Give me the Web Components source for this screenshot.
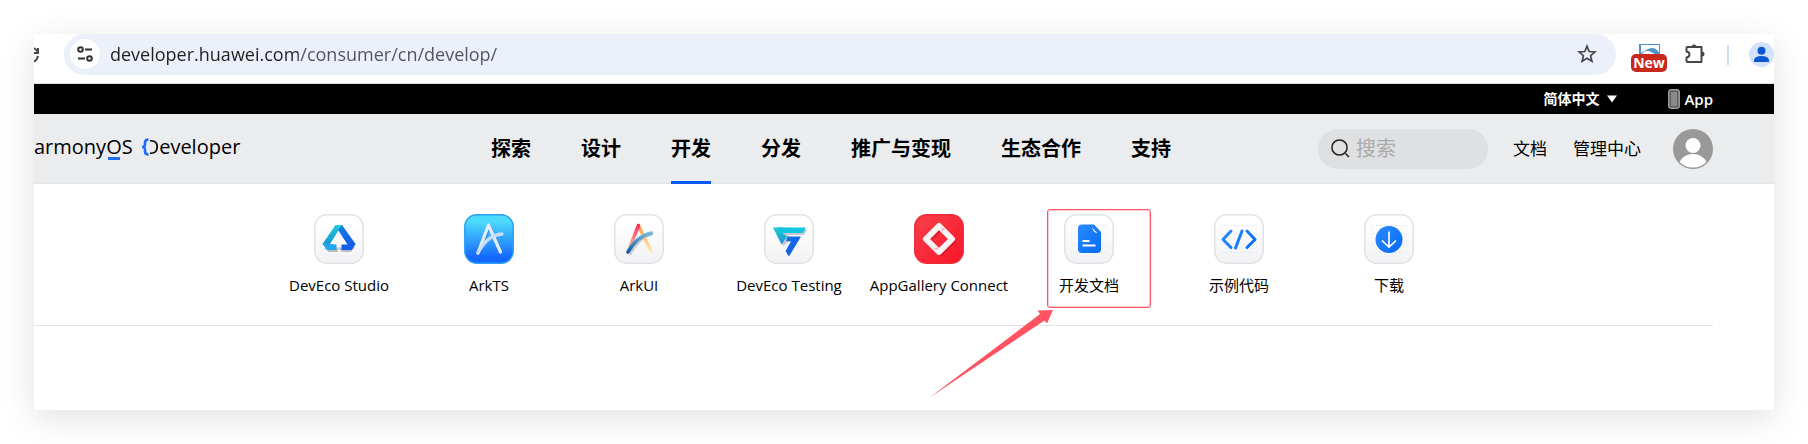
<!DOCTYPE html>
<html lang="zh-CN">
<head>
<meta charset="utf-8">
<title>HarmonyOS Developer</title>
<style>
body { margin: 0; background: #fff; font-family: "Open Sans", "Noto Sans CJK SC", sans-serif; color: #000; }
</style>
</head>
<body>
<browser-window>
  <address-bar></address-bar>
  <top-strip></top-strip>
  <site-header>
    <nav-item>探索</nav-item>
    <nav-item>设计</nav-item>
    <nav-item active>开发</nav-item>
    <nav-item>分发</nav-item>
    <nav-item>推广与变现</nav-item>
    <nav-item>生态合作</nav-item>
    <nav-item>支持</nav-item>
  </site-header>
  <tool-row>
    <tool-tile icon="studio">DevEco Studio</tool-tile>
    <tool-tile icon="arkts">ArkTS</tool-tile>
    <tool-tile icon="arkui">ArkUI</tool-tile>
    <tool-tile icon="testing">DevEco Testing</tool-tile>
    <tool-tile icon="connect">AppGallery Connect</tool-tile>
    <tool-tile icon="docs" marked>开发文档</tool-tile>
    <tool-tile icon="code">示例代码</tool-tile>
    <tool-tile icon="download">下载</tool-tile>
  </tool-row>
</browser-window>

<script>
function define(name, html, setup) {
  const template = document.createElement('template');
  template.innerHTML = html;
  customElements.define(name, class extends HTMLElement {
    constructor() {
      super();
      this.attachShadow({ mode: 'open' }).append(template.content.cloneNode(true));
    }
    connectedCallback() { if (setup) setup(this, this.shadowRoot); }
  });
}

define('browser-window', `
<style>
:host { display: block; padding: 34px; }
.window { background: #fff; padding-bottom: 84px; box-shadow: 0 8px 32px rgba(0,0,0,.12); }
</style>
<div class="window"><slot></slot></div>`);

define('address-bar', `
<style>
:host { display: block; border-bottom: 1px solid #dedede; overflow: hidden; }
.bar { display: flex; align-items: center; height: 49px; box-sizing: border-box; padding-bottom: 8px; }
button { border: 0; padding: 0; background: none; display: block; flex: none; }
svg { display: block; }
.reload { width: 6px; margin-right: 24px; }
.pill { flex: 1; display: flex; align-items: center; height: 41px; box-sizing: border-box; padding: 0 19px 2px 6px; border-radius: 21px; background: #ecf0fa; }
.site { width: 30px; height: 30px; border-radius: 50%; background: #fff; margin-right: 10px; }
.site svg { margin: 0 auto; }
input { flex: 1; min-width: 0; border: 0; padding: 0; height: 28px; font: 18px "Open Sans", sans-serif; color: #1f1f1f;
  background: linear-gradient(90deg, #1f1f1f 188px, #50535a 188px); -webkit-background-clip: text; background-clip: text; -webkit-text-fill-color: transparent; }
.ext { display: flex; flex-direction: column; align-items: center; width: 36px; height: 41px; box-sizing: border-box; padding-top: 10px; margin-left: 15px; }
.ext span { width: 36px; font: 700 14px/18px "Open Sans", sans-serif; color: #fff; background: #c9281d; border-radius: 5px; text-align: center; }
.puzzle { margin-left: 17px; }
.puzzle svg { margin-bottom: 2px; }
.sep { width: 2px; height: 20px; background: #cfe0fc; margin: 0 20px 0 21px; }
</style>
<div class="bar">
  <button class="reload" aria-label="reload"><svg width="6" height="16" viewBox="0 0 6 16" fill="none" stroke="#454746" stroke-width="2"><path d="M4 1v5H0M0 1q2.500 1.500 4 4M4 9q-1 4-4 5.500"/></svg></button>
  <div class="pill">
    <button class="site" aria-label="site information"><svg width="16" height="16" viewBox="0 0 16 16" fill="none" stroke="#303030" stroke-width="2"><circle cx="3.500" cy="3.500" r="2.300"/><path d="M8 3.500h7M1 12.500h7"/><circle cx="12.500" cy="12.500" r="2.300"/></svg></button>
    <input type="text" aria-label="address" value="developer.huawei.com/consumer/cn/develop/">
    <button aria-label="bookmark"><svg width="20" height="20" viewBox="0 0 20 20" fill="none" stroke="#454746" stroke-width="1.700"><path d="M10 2.200l2.200 5.300 5.700.5-4.300 3.700 1.300 5.600L10 14.300l-4.900 3 1.300-5.600L2.100 8l5.700-.5z"/></svg></button>
  </div>
  <button class="ext" aria-label="extension"><svg width="21" height="10" viewBox="0 0 21 10"><path d="M0 0h21v10H0z" fill="#4b93c8"/><path d="M2 1h18v8Q16 4 9 5L2 9z" fill="#fff"/><path d="M8.500 5.500Q12 3 16 4.500q3 1.500 4 4.500-5 0-8-2z" fill="#4b93c8"/><path d="M3 10q3-4 7-3l6 3z" fill="#fff"/></svg><span>New</span></button>
  <button class="puzzle" aria-label="extensions"><svg width="22" height="22" viewBox="0 0 22 22"><path d="M3.500 4h14v14.500q0 .500-.500.500H3.500q-1 0-1-1v-3.500q3-.5 3-3t-3-3V5q0-1 1-1z" fill="none" stroke="#454746" stroke-width="2" stroke-linejoin="round"/><path d="M7.500 4a2.500 2.500 0 0 1 5 0zM18 8.500a2.500 2.500 0 0 1 0 5z" fill="#454746"/></svg></button>
  <span class="sep"></span>
  <button aria-label="profile"><svg width="25" height="25" viewBox="0 0 25 25"><circle cx="12.500" cy="12.500" r="12.500" fill="#d3e3fd"/><circle cx="12.500" cy="8.800" r="4" fill="#0b57d0"/><path d="M5 20v-2q1-4 7.500-4t7.500 4v2z" fill="#0b57d0"/></svg></button>
</div>`);

define('top-strip', `
<style>
:host { display: flex; justify-content: flex-end; align-items: center; height: 30px; padding-right: 61px; background: #000; }
button, a { display: flex; align-items: center; border: 0; padding: 0; background: none; color: #fff; text-decoration: none; }
button { font: 700 14px/20px "Open Sans", "Noto Sans CJK SC", sans-serif; gap: 8px; margin-right: 51px; }
a { font: 600 15px/20px "Open Sans", sans-serif; gap: 4px; }
</style>
<button>简体中文<svg width="10" height="8" viewBox="0 0 10 8"><path d="M0 .500h10L5 7.500z" fill="#fff"/></svg></button>
<a href="#app"><svg width="12" height="20" viewBox="0 0 12 20"><rect x="1" y="1" width="10" height="18" rx="2" fill="#888" stroke="#ccc" stroke-width="1.500"/><rect x="2" y="2" width="8" height="16" fill="#8a8a8a" stroke="#222" stroke-width=".8"/></svg>App</a>`);

define('site-header', `
<style>
:host { display: flex; align-items: center; height: 70px; box-sizing: border-box; padding-right: 61px; background: #ebecee; border-bottom: 1px solid #e4e5e6; }
.logo { display: flex; align-items: center; width: 208px; height: 40px; padding-bottom: 4px; margin-right: 249px; font: 500 20px/36px "Open Sans", sans-serif; color: #000; text-decoration: none; white-space: nowrap; }
.o { position: relative; }
.o::after { content: ""; position: absolute; left: 2px; right: 2px; bottom: 0; height: 3px; background: #1f6bff; }
.logo svg { margin-left: 8px; flex: none; }
.d { margin-left: -4px; background: linear-gradient(90deg, transparent 5px, #000 5px); -webkit-background-clip: text; background-clip: text; -webkit-text-fill-color: transparent; }
nav { display: flex; gap: 50px; height: 100%; }
.side { display: flex; align-items: center; margin-left: auto; font: 17px/24px "Open Sans", "Noto Sans CJK SC", sans-serif; }
label { display: flex; align-items: center; gap: 6px; width: 170px; height: 40px; box-sizing: border-box; padding: 0 13px; border-radius: 20px; background: #dfe0e1; margin-right: 25px; }
input { flex: 1; min-width: 0; border: 0; padding: 0; background: none; font: 20px/28px "Open Sans", "Noto Sans CJK SC", sans-serif; }
input::placeholder { color: #a9aaab; }
.side a { color: #000; text-decoration: none; margin-right: 26px; }
.side a:last-of-type { margin-right: 32px; }
button { border: 0; padding: 0; background: none; }
svg { display: block; }
</style>
<a class="logo" href="#home"><span>armony<span class="o">O</span>S</span><svg width="8" height="18" viewBox="0 0 8 18" fill="none" stroke="#1f6bff" stroke-width="2.600"><path d="M7.500 1.500Q4 1.500 4 4.500v2Q4 9 1 9q3 0 3 2.500v2q0 3 3.500 3"/></svg><span class="d">D</span>eveloper</a>
<nav><slot></slot></nav>
<div class="side">
  <label><svg width="19" height="19" viewBox="0 0 19 19" fill="none" stroke="#222" stroke-width="1.500"><circle cx="8.500" cy="8.500" r="7.600"/><path d="M14.500 14.500l3.500 3.500"/></svg><input type="search" placeholder="搜索" aria-label="搜索"></label>
  <a href="#docs">文档</a><a href="#console">管理中心</a>
  <button aria-label="account"><svg width="40" height="40" viewBox="0 0 40 40"><circle cx="20" cy="20" r="20" fill="#999"/><circle cx="20" cy="16.500" r="7.500" fill="#fff"/><path d="M6.500 33Q11 25 20 25t13.500 8Q28 38.500 20 38.500T6.500 33z" fill="#fff"/></svg></button>
</div>`);

define('nav-item', `
<style>
:host { display: flex; height: 70px; }
a { display: flex; align-items: center; box-sizing: border-box; height: 70px; padding-top: 1px; border-bottom: 3px solid transparent; font: 700 20px/30px "Noto Sans CJK SC", sans-serif; color: #000; text-decoration: none; white-space: nowrap; }
:host([active]) a { border-color: #0a59f7; }
</style>
<a href="#section"><slot></slot></a>`);

define('tool-row', `
<style>
:host { display: grid; grid-template-columns: repeat(8, 150px); height: 141px; margin-right: 61px; padding-left: 230px; border-bottom: 1px solid #e3e3e3; }
</style>
<slot></slot>`);

const frame = (fill, art, edge = '#e2e2e4') =>
  `<rect x=".8" y=".8" width="48.400" height="48.400" rx="12" fill="${fill}" stroke="${edge}" stroke-width="1.500"/>${art}`;
const white = 'url(#paper)';
const rules = '<path d="M7 11.500h36M7 20h36M7 30h36M7 38.500h36" stroke="#d5e2fa" stroke-dasharray="1 1.500"/>';
const ICONS = {
  studio: frame(white, `
    <path d="M10 34l5 4h9v-4l4 4h9l4-5" fill="#bbb"/>
    <path d="M21.500 11h7L17 29.500 12 34l-3.500-4z" fill="url(#teal)"/>
    <path d="M28 11L41.500 30l-4 6-14-19z" fill="url(#blue)"/>
    <path d="M24.500 16.500L16 30h5l4-4.500 4 4.500h4z" fill="#fbfbfb"/>
    <path d="M8.500 29.500l14 1V36h-9.500z" fill="#22a4ee"/>
    <path d="M27.500 30.500h13l1-.5-4 6h-10z" fill="#1260ea"/>`),
  arkts: frame('url(#sky)', `
    <g fill="none" stroke-linecap="round" stroke-linejoin="round"><path d="M15 40l10.500-28L37.500 38" stroke="#1669dd" stroke-width="3" opacity=".5"/>
    <path d="M14 39l10.500-28L36.500 38" stroke="#e3edf8" stroke-width="3.300"/>
    <path d="M14 39Q23 21 38 20" stroke="#cadbf3" stroke-width="3.300"/></g>`, '#2f9ff6'),
  arkui: frame(white, `
    <g fill="none" stroke-linecap="round"><path d="M16 40Q26 23 38 20" stroke="#ccc" stroke-width="2.500"/>
    <path d="M24.500 12l12.500 25" stroke="url(#gold)" stroke-width="3.500"/>
    <path d="M24.500 11.500L14 38" stroke="url(#rose)" stroke-width="3.500"/>
    <path d="M14 38Q23 22 37.500 19" stroke="url(#sea)" stroke-width="3.500"/></g>`),
  testing: frame(white, `
    <path d="M11 16h32l-3 5H24l4 4-9 7z" fill="#c5c8cc"/>
    <path d="M9 13.500h12l-2.500 5.500 4.500 3.500-5.500 8z" fill="url(#teal)"/>
    <path d="M14 13.500h28l-3 5.500H17z" fill="#12c5e0"/>
    <path d="M23.500 22.500h13.500L25 42.500 21.500 37l5.500-9.500-5-.5z" fill="url(#blue)"/>`),
  connect: frame('url(#red)', `
    <path d="M27 14l12.500 13L27 39.500 14.500 27z" fill="none" stroke="#b40e1d" stroke-width="5" stroke-linejoin="round" opacity=".4"/>
    <path d="M25 12L38 25 25 38 12 25z" fill="none" stroke="#f7f3f3" stroke-width="6" stroke-linejoin="round"/>
    <path d="M27 13.500l4 1.500-3 2.500zM19 34.500l4 1.500 2-2.500z" fill="#f3b4b8"/>`, '#ef2b38'),
  docs: frame(white, `${rules}
    <path d="M18 10.500h12l7 7.500v17q0 4-4 4H18q-4 0-4-4V14.500q0-4 4-4z" fill="url(#azure)"/>
    <path d="M28 13.500q1.500 5.500 5.500 5.500" fill="#e4efff"/>
    <path d="M18.500 27h7M18.500 31.500h13" stroke="#fff" stroke-width="2"/>`),
  code: frame(white, `${rules}
    <path d="M17 17l-8 8.500 8 8M33 17l8 8.500-8 8M28 17l-6.500 17" fill="none" stroke="url(#azure)" stroke-width="3" stroke-linecap="round" stroke-linejoin="round"/>`),
  download: frame(white, `${rules}
    <circle cx="25" cy="25.500" r="13.500" fill="url(#azure)"/>
    <path d="M25 18v14M18.500 27l6.500 6 6.500-6" fill="none" stroke="#fff" stroke-width="1.700" stroke-linecap="round"/>`)
};
const gradient = (id, a, b, x2, y2) =>
  `<linearGradient id="${id}" gradientUnits="userSpaceOnUse" x1="8" y1="8" x2="${x2}" y2="${y2}"><stop stop-color="${a}"/><stop offset="1" stop-color="${b}"/></linearGradient>`;
const DEFS = '<defs>' +
  gradient('paper', '#ffffff', '#f3f3f5', 8, 46) +
  gradient('sky', '#4bd9fc', '#1467fd', 8, 44) +
  gradient('red', '#f93a47', '#f91b2d', 42, 42) +
  gradient('teal', '#23dcd8', '#1590d7', 10, 32) +
  gradient('blue', '#0b8ff5', '#1750dc', 42, 42) +
  gradient('azure', '#3290ff', '#046bf7', 38, 38) +
  gradient('gold', '#fb922f', '#fff3c7', 8, 40) +
  gradient('rose', '#ff174f', '#fac5a3', 8, 34) +
  gradient('sea', '#bfe7f5', '#065fad', 8, 38) + '</defs>';

define('tool-tile', `
<style>
:host { display: block; position: relative; }
a { display: flex; flex-direction: column; align-items: center; gap: 9px; padding-top: 30px; font: 15px/24px "Open Sans", "Noto Sans CJK SC", sans-serif; color: #000; text-decoration: none; white-space: nowrap; }
svg { display: block; }
.mark { display: none; }
:host([marked]) .mark { display: block; }
.box { position: absolute; left: 33px; top: 25px; width: 104px; height: 99px; box-sizing: border-box; border: 1px solid #ff5264; border-radius: 3px; box-shadow: inset 0 0 0 1px rgba(255,82,100,.3); }
.arrow { position: absolute; right: 111px; top: 125px; }
</style>
<a href="#tool"><svg class="art" width="50" height="50" viewBox="0 0 50 50"></svg><span><slot></slot></span></a>
<div class="mark"><div class="box"></div><svg class="arrow" width="124" height="90" viewBox="0 0 124 90"><path d="M0 89L111 5l-2.500-3.500L124 1l-6 13.500-2.500-3z" fill="#ff5364"/></svg></div>`,
(host, root) => { root.querySelector('.art').innerHTML = DEFS + ICONS[host.getAttribute('icon')]; });
</script>
</body>
</html>
